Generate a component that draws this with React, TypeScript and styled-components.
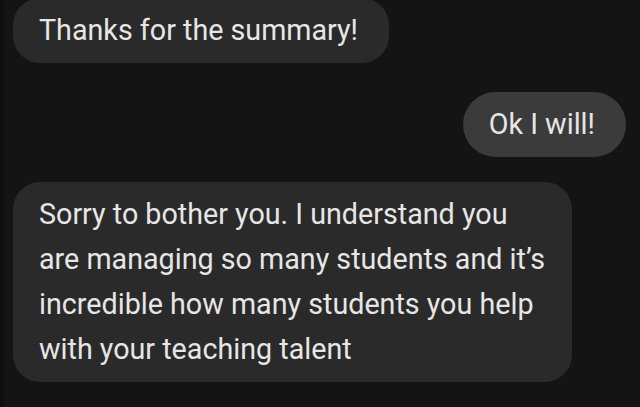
import React from "react";
import styled, { createGlobalStyle } from "styled-components";

const Global = createGlobalStyle`
  html, body {
    margin: 0;
    padding: 0;
    background: #141414;
    overflow: hidden;
  }
  #root {
    width: 640px;
    height: 407px;
  }
`;

const Screen = styled.div`
  width: 640px;
  height: 407px;
  box-sizing: border-box;
  background: #141414;
  border-left: 4px solid #0f0f0f;
  display: flex;
  flex-direction: column;
  padding: 0 14px 0 9px;
  overflow: hidden;
  font-family: Roboto, "Noto Sans", sans-serif;
`;

const Bubble = styled.div<{ $out?: boolean; $top: number; $multi?: boolean }>`
  align-self: ${(p) => (p.$out ? "flex-end" : "flex-start")};
  margin-top: ${(p) => p.$top}px;
  box-sizing: border-box;
  max-width: 559px;
  padding: 10px ${(p) => (p.$multi ? 20 : 31)}px 10px 26px;
  border-radius: ${(p) => (p.$out ? "33px" : "27px")};
  background: ${(p) => (p.$out ? "#3b3b3b" : "#2a2a2a")};
  color: #e6e6e6;
  font-size: 28.7px;
  line-height: 45px;
  letter-spacing: 0;
`;

const messages = [
  { text: "Thanks for the summary!", out: false, top: -2, multi: false },
  { text: "Ok I will!", out: true, top: 29, multi: false },
  {
    text:
      "Sorry to bother you. I understand you are managing so many students and it\u2019s incredible how many students you help with your teaching talent",
    out: false,
    top: 25,
    multi: true,
  },
];

export default function App() {
  return (
    <>
      <Global />
      <Screen>
        {messages.map((m, i) => (
          <Bubble key={i} $out={m.out} $top={m.top} $multi={m.multi}>
            {m.text}
          </Bubble>
        ))}
      </Screen>
    </>
  );
}
